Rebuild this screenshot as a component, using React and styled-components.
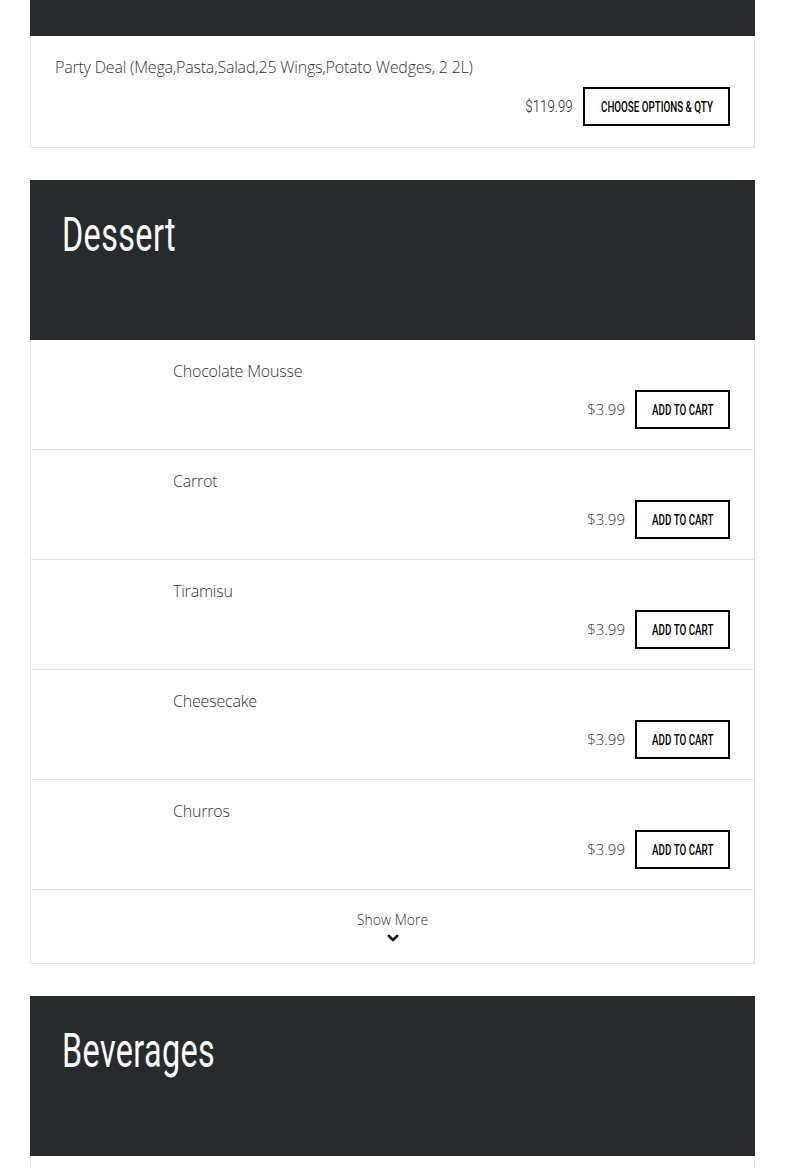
import React from "react";
import styled, { createGlobalStyle } from "styled-components";

const Global = createGlobalStyle`
  html, body { margin: 0; padding: 0; background: #fff; }
  body { font-family: "Open Sans", "Liberation Sans", sans-serif; color: #333; }
  * { box-sizing: border-box; }
`;

const Page = styled.div`
  padding: 0 30px;
`;

const Section = styled.section`
  margin-bottom: 32px;
`;

const CategoryHeader = styled.div`
  background: #282b2e;
  height: ${(p) => (p.$clipped ? "36px" : "160px")};
  padding: ${(p) => (p.$clipped ? "0" : "27px 32px 0")};
`;

/* condensed display face emulation (Oswald-like) */
const Condensed = styled.span`
  display: inline-block;
  white-space: nowrap;
  transform: scaleX(${(p) => p.$scale || 0.72});
  transform-origin: ${(p) => p.$origin || "center"};
`;

const CategoryTitle = styled.h2`
  margin: 0;
  color: #fff;
  font-family: Roboto, "Liberation Sans", sans-serif;
  font-weight: 400;
  font-size: 49px;
  line-height: 56px;
  letter-spacing: 0.6px;
`;

const List = styled.div`
  border: 1px solid #e2e2e2;
  border-top: none;
`;

const Row = styled.div`
  display: flex;
  padding: ${(p) => (p.$loose ? "19px 24px 21px" : "19px 24px 20px")};
  border-bottom: 1px solid #e2e2e2;
  &:last-child { border-bottom: none; }
`;

const Thumb = styled.div`
  flex: 0 0 118px;
`;

const RowBody = styled.div`
  flex: 1;
  display: flex;
  flex-direction: column;
  gap: ${(p) => (p.$loose ? "8px" : "7px")};
`;

const ItemName = styled.div`
  font-size: 16px;
  font-weight: 300;
  line-height: 24px;
  letter-spacing: -0.2px;
  color: #333;
`;

const Actions = styled.div`
  display: flex;
  justify-content: flex-end;
  align-items: center;
  gap: 10px;
`;

const Price = styled.span`
  font-family: "Open Sans", sans-serif;
  font-size: 15px;
  font-weight: 300;
  color: #333;
  margin-bottom: 2px;
`;

const CondensedPrice = styled.span`
  display: flex;
  justify-content: flex-end;
  width: ${(p) => p.$w}px;
  font-family: Roboto, sans-serif;
  font-weight: 300;
  font-size: 17px;
  color: #222;
  margin-bottom: 2px;
`;

const Button = styled.button`
  display: flex;
  align-items: center;
  justify-content: center;
  width: ${(p) => p.$w}px;
  height: 39px;
  padding: 0;
  background: #fff;
  border: 2px solid #000;
  font-family: Roboto, sans-serif;
  font-weight: 500;
  font-size: 14px;
  text-transform: uppercase;
  color: #000;
  cursor: pointer;
`;

const ShowMoreRow = styled.div`
  border-bottom: 1px solid #e2e2e2;
  &:last-child { border-bottom: none; }
`;

const ShowMore = styled.button`
  display: flex;
  flex-direction: column;
  align-items: center;
  width: 100%;
  height: 73px;
  padding: 20px 0 0;
  background: #fff;
  border: none;
  font-family: "Open Sans", sans-serif;
  font-weight: 300;
  font-size: 14px;
  line-height: 20px;
  color: #333;
  cursor: pointer;
`;

const ChevronIcon = styled.svg`
  margin-top: 4px;
`;

const Chevron = () => (
  <ChevronIcon width="12" height="8" viewBox="0 0 12 8">
    <polyline points="1.8,1.8 6,6 10.2,1.8" fill="none" stroke="#111" strokeWidth="2.6" strokeLinecap="round" strokeLinejoin="round" />
  </ChevronIcon>
);

const desserts = ["Chocolate Mousse", "Carrot", "Tiramisu", "Cheesecake", "Churros"];

function Item({ name, price, label, withThumb, wide }) {
  return (
    <Row $loose={wide}>
      {withThumb && <Thumb />}
      <RowBody $loose={wide}>
        <ItemName>{name}</ItemName>
        <Actions>
          {wide ? (
            <CondensedPrice $w={46}>
              <Condensed $scale={0.78} $origin="right">{price}</Condensed>
            </CondensedPrice>
          ) : (
            <Price>{price}</Price>
          )}
          <Button $w={wide ? 147 : 95}>
            <Condensed $scale={0.7}>{label}</Condensed>
          </Button>
        </Actions>
      </RowBody>
    </Row>
  );
}

export default function App() {
  return (
    <Page>
      <Global />
      <Section>
        <CategoryHeader $clipped />
        <List>
          <Item
            name="Party Deal (Mega,Pasta,Salad,25 Wings,Potato Wedges, 2 2L)"
            price="$119.99"
            label="Choose Options & Qty"
            wide
          />
        </List>
      </Section>
      <Section>
        <CategoryHeader>
          <CategoryTitle>
            <Condensed $scale={0.66} $origin="left">Dessert</Condensed>
          </CategoryTitle>
        </CategoryHeader>
        <List>
          {desserts.map((d) => (
            <Item key={d} name={d} price="$3.99" label="Add to Cart" withThumb />
          ))}
          <ShowMoreRow>
            <ShowMore>
              Show More
              <Chevron />
            </ShowMore>
          </ShowMoreRow>
        </List>
      </Section>
      <Section>
        <CategoryHeader>
          <CategoryTitle>
            <Condensed $scale={0.66} $origin="left">Beverages</Condensed>
          </CategoryTitle>
        </CategoryHeader>
        <List>
          <Item name="Coca-Cola" price="$2.49" label="Add to Cart" withThumb />
        </List>
      </Section>
    </Page>
  );
}
